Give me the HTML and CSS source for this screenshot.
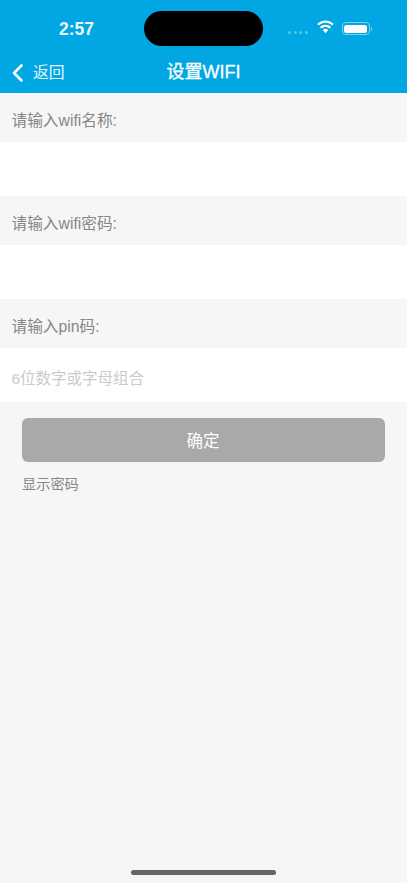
FILE: index.html
```html
<!DOCTYPE html>
<html lang="zh-CN">
<head>
<meta charset="utf-8">
<title>设置WIFI</title>
<link rel="stylesheet" href="styles.css">
</head>
<body>
<div class="page">
  <header class="top">
    <div class="status">
      <span class="time">2:57</span>
      <span class="island"></span>
      <div class="status-right">
        <span class="dots"><i></i><i></i><i></i><i></i></span>
        <svg class="wifi" width="19" height="15" viewBox="0 0 18 14"><path d="M9 2.600c2.500 0 4.700 1 6.300 2.500l1.500-1.500C14.700 1.600 12 .4 9 .4S3.300 1.600 1.200 3.600l1.500 1.500C4.300 3.600 6.500 2.600 9 2.600z" fill="#fff"/><path d="M9 6.500c1.500 0 2.800.6 3.800 1.500l1.500-1.500C12.900 5.100 11 4.300 9 4.300s-3.900.8-5.300 2.200L5.200 8c1-.9 2.300-1.500 3.800-1.500z" fill="#fff"/><path d="M9 8.300c-1 0-1.800.4-2.500 1L9 12.400l2.500-3.100c-.7-.6-1.500-1-2.500-1z" fill="#fff"/></svg>
        <span class="battery"><span class="battery-fill"></span></span><span class="battery-cap"></span>
      </div>
    </div>
    <nav class="nav">
      <div class="back">
        <svg class="chevron" width="13" height="20" viewBox="0 0 13 20"><path d="M10.500 2.500L3 10l7.500 7.500" fill="none" stroke="#fff" stroke-width="2.600" stroke-linecap="round" stroke-linejoin="round"/></svg>
        <span>返回</span>
      </div>
      <h1 class="title">设置WIFI</h1>
    </nav>
  </header>
  <main>
    <div class="label">请输入wifi名称:</div>
    <div class="field"></div>
    <div class="label">请输入wifi密码:</div>
    <div class="field"></div>
    <div class="label">请输入pin码:</div>
    <div class="field placeholder">6位数字或字母组合</div>
    <button class="confirm" type="button">确定</button>
    <div class="show">显示密码</div>
  </main>
  <div class="home"></div>
</div>
</body>
</html>
```
FILE: styles.css
```css
* { box-sizing: border-box; }
html, body { margin: 0; padding: 0; }
body {
  width: 407px;
  height: 883px;
  overflow: hidden;
  background: #f6f6f6;
  font-family: "Liberation Sans", "Noto Sans CJK SC", sans-serif;
}
.page {
  position: relative;
  height: 883px;
}
.top {
  height: 93px;
  background: #00a7e3;
  color: #fff;
}
.status {
  height: 49px;
  position: relative;
  display: flex;
  align-items: center;
  padding-top: 8px;
}
.time {
  margin-left: 59px;
  width: 50px;
  font-size: 17.500px;
  font-weight: 700;
  line-height: 24px;
  color: #eaf8fe;
}
.island {
  position: absolute;
  left: 144px;
  top: 11px;
  width: 119px;
  height: 35px;
  border-radius: 18px;
  background: #000;
}
.status-right {
  margin-left: auto;
  margin-right: 35px;
  display: flex;
  align-items: center;
}
.dots {
  display: flex;
  gap: 2.500px;
  margin-right: 8px;
  margin-top: 7px;
}
.dots i {
  width: 3px;
  height: 3px;
  border-radius: 50%;
  background: #5cc3ea;
}
.wifi { margin-right: 7px; margin-top: -2px; }
.battery {
  width: 28px;
  height: 13px;
  border-radius: 4px;
  border: 1px solid #80d2f0;
  padding: 1.500px;
  display: flex;
}
.battery-fill {
  flex: 1;
  border-radius: 2.500px;
  background: #fff;
}
.battery-cap {
  width: 1.500px;
  height: 4px;
  margin-left: 1px;
  border-radius: 0 1px 1px 0;
  background: #80d2f0;
}
.nav {
  position: relative;
  height: 44px;
  display: flex;
  align-items: center;
  justify-content: center;
  padding-top: 2px;
}
.back {
  position: absolute;
  left: 11px;
  top: 14px;
  display: flex;
  align-items: center;
  gap: 9px;
  font-size: 15.800px;
  line-height: 20px;
  color: #e6f6fd;
}
.title {
  margin: 0;
  font-size: 18px;
  font-weight: 400;
  line-height: 24px;
  -webkit-text-stroke: 0.300px #fff;
}
.label {
  height: 48.500px;
  padding: 4px 11.500px 0;
  display: flex;
  align-items: center;
  font-size: 15.700px;
  color: #868686;
}
.field {
  height: 54.500px;
  background: #fff;
  padding: 4px 11.500px 0;
  display: flex;
  align-items: center;
  font-size: 15.500px;
}
.placeholder { color: #cbcbcb; }
.confirm {
  display: block;
  margin: 16px 22px 0;
  width: 363px;
  height: 44px;
  border: 0;
  border-radius: 6px;
  background: #a9a9a9;
  color: #fff;
  font-family: inherit;
  font-size: 16.500px;
  padding: 0 1px 0 0;
}
.show {
  margin: 12px 22px 0;
  font-size: 14.200px;
  line-height: 20px;
  color: #868686;
}
.home {
  position: absolute;
  left: 131px;
  top: 870px;
  width: 145px;
  height: 5px;
  border-radius: 3px;
  background: #666;
}
```
